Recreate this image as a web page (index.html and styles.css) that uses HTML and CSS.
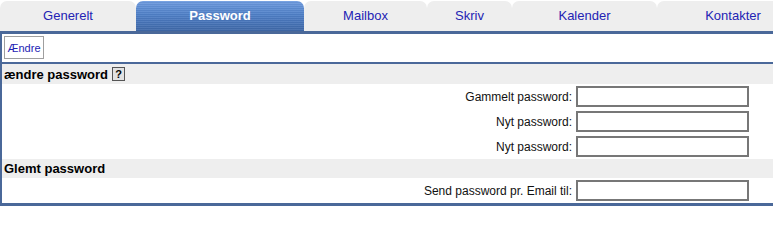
FILE: index.html
```html
<!DOCTYPE html>
<html lang="da">
<head>
<meta charset="utf-8">
<title>Password</title>
<link rel="stylesheet" href="styles.css">
</head>
<body>
<div class="page">
  <nav class="tabs">
    <a class="tab">Generelt</a>
    <a class="tab active">Password</a>
    <a class="tab">Mailbox</a>
    <a class="tab">Skriv</a>
    <a class="tab">Kalender</a>
    <a class="tab">Kontakter</a>
  </nav>
  <div class="panel">
    <div class="toolbar"><button class="btn" type="button">Ændre</button></div>
    <div class="sechead sechead-first">ændre password <span class="help">?</span></div>
    <div class="row"><label class="lbl">Gammelt password:</label><input class="field" type="password"></div>
    <div class="row"><label class="lbl">Nyt password:</label><input class="field" type="password"></div>
    <div class="row"><label class="lbl">Nyt password:</label><input class="field" type="password"></div>
    <div class="sechead sechead-second">Glemt password</div>
    <div class="row"><label class="lbl">Send password pr. Email til:</label><input class="field" type="text"></div>
  </div>
</div>
</body>
</html>
```
FILE: styles.css
```css
html, body {
  margin: 0;
  padding: 0;
  background: #ffffff;
}
.page {
  width: 773px;
  overflow: hidden;
  font-family: "Liberation Sans", Arial, sans-serif;
}
.tabs {
  display: grid;
  grid-template-columns: 136px 168px 123px 85px 145px 152px;
  width: 809px;
  padding-top: 1px;
}
.tab {
  display: block;
  height: 30px;
  line-height: 30px;
  text-align: center;
  font-size: 13px;
  color: #2323b4;
  background: #eeeeee;
  border-radius: 7px 7px 0 0;
  cursor: pointer;
}
.tab.active {
  color: #ffffff;
  font-weight: bold;
  background:
    repeating-linear-gradient(to bottom, rgba(255,255,255,0.07) 0 1px, rgba(0,0,0,0.04) 1px 2px),
    linear-gradient(to bottom, #6f9ce0 0%, #4f80c8 45%, #3f68a8 100%);
}
.panel {
  border-left: 2px solid #4a6899;
  border-top: 3px solid #4a6899;
  border-bottom: 3px solid #4a6899;
}
.toolbar {
  height: 26px;
  padding: 2px 0 0 2px;
  border-bottom: 2px solid #4a6899;
}
.btn {
  display: block;
  width: 40px;
  height: 23px;
  margin: 0;
  padding: 0;
  border: 1px solid #9f9f9f;
  background: #ffffff;
  color: #2323b4;
  font-family: "Liberation Sans", Arial, sans-serif;
  font-size: 11px;
}
.sechead {
  background: #eeeeee;
  font-size: 13px;
  font-weight: bold;
  color: #000;
  padding-left: 2px;
  display: flex;
  align-items: center;
}
.sechead-first { height: 20px; }
.sechead-second { height: 19px; }
.help {
  display: inline-block;
  width: 11px;
  height: 12px;
  margin-left: 4px;
  border: 1px solid #555;
  background: #e2e2e2;
  font-size: 11px;
  line-height: 12px;
  text-align: center;
}
.row {
  height: 25px;
  display: flex;
  justify-content: flex-end;
  align-items: center;
  gap: 4px;
  padding-right: 24px;
}
.lbl {
  font-size: 12px;
  color: #111;
}
.field {
  box-sizing: border-box;
  width: 173px;
  height: 21px;
  margin: 0;
  padding: 0 3px;
  border: 2px solid #777777;
  background: #fff;
  outline: none;
}
```
